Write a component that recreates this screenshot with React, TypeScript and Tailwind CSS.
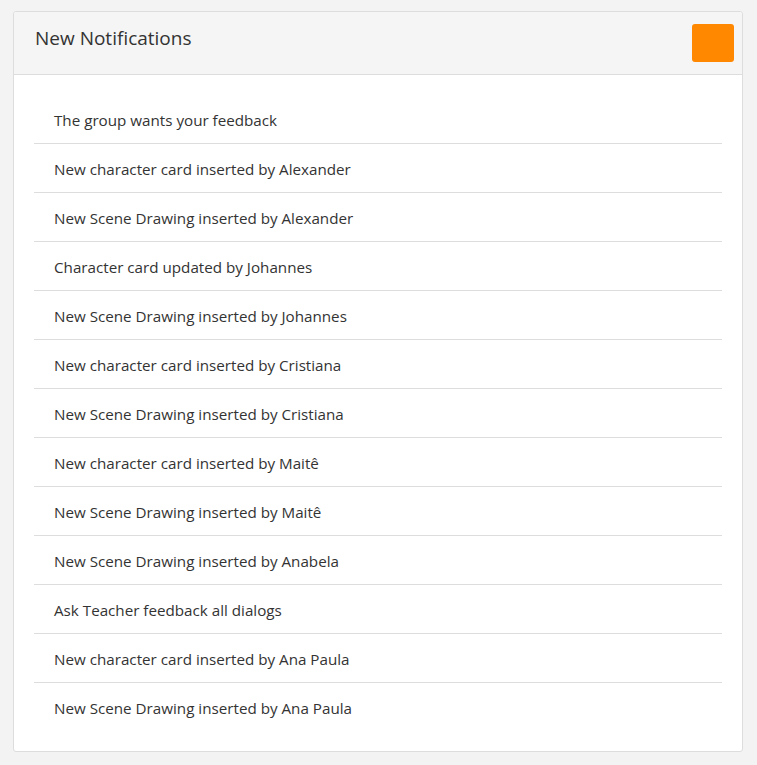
const items = [
  'The group wants your feedback',
  'New character card inserted by Alexander',
  'New Scene Drawing inserted by Alexander',
  'Character card updated by Johannes',
  'New Scene Drawing inserted by Johannes',
  'New character card inserted by Cristiana',
  'New Scene Drawing inserted by Cristiana',
  'New character card inserted by Maitê',
  'New Scene Drawing inserted by Maitê',
  'New Scene Drawing inserted by Anabela',
  'Ask Teacher feedback all dialogs',
  'New character card inserted by Ana Paula',
  'New Scene Drawing inserted by Ana Paula',
];

export default function App() {
  return (
    <div
      className="min-h-[765px] bg-[#f3f3f3] pt-[11px] pl-[13px]"
      style={{ fontFamily: '"Open Sans", "Noto Sans", sans-serif' }}
    >
      <div className="w-[730px] rounded-[3px] border border-[#dddddd] bg-white">
        <div className="flex h-[63px] items-start justify-between rounded-t-[3px] border-b border-[#dddddd] bg-[#f5f5f5] pl-[21px] pr-[8px] pt-[12px]">
          <h2 className="mt-[2px] text-[19px] leading-[24px] text-[#333333]">New Notifications</h2>
          <div className="h-[38px] w-[42px] rounded-[3px] bg-[#ff8800]" />
        </div>
        <ul className="px-[20px] py-[20px]">
          {items.map((t, i) => (
            <li
              key={i}
              className={`px-[20px] pt-[14px] pb-[12px] text-[15.2px] leading-[22px] text-[#333333] ${
                i < items.length - 1 ? 'border-b border-[#dddddd]' : ''
              }`}
            >
              {t}
            </li>
          ))}
        </ul>
      </div>
    </div>
  );
}
